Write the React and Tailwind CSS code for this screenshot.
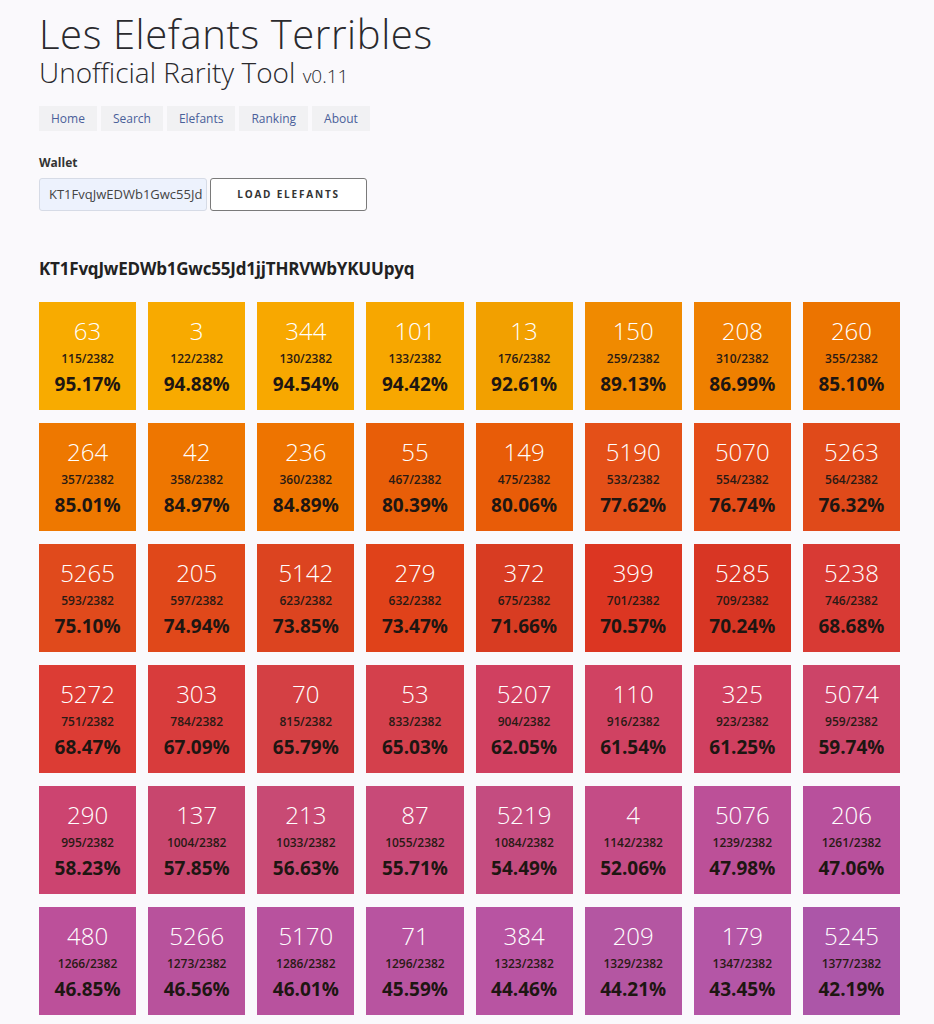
import React from "react";

const tiles = [
  [63, 115, "95.17", "#f8ab00"], [3, 122, "94.88", "#f8aa00"], [344, 130, "94.54", "#f8a800"], [101, 133, "94.42", "#f7a700"],
  [13, 176, "92.61", "#f2a000"], [150, 259, "89.13", "#f08a00"], [208, 310, "86.99", "#ef8000"], [260, 355, "85.10", "#ec7400"],
  [264, 357, "85.01", "#ee7800"], [42, 358, "84.97", "#ee7600"], [236, 360, "84.89", "#ee7400"], [55, 467, "80.39", "#e85e08"],
  [149, 475, "80.06", "#e85c08"], [5190, 533, "77.62", "#e45018"], [5070, 554, "76.74", "#e44c18"], [5263, 564, "76.32", "#e04a1a"],
  [5265, 593, "75.10", "#e04a1c"], [205, 597, "74.94", "#e0481a"], [5142, 623, "73.85", "#dc4420"], [279, 632, "73.47", "#e0421a"],
  [372, 675, "71.66", "#d83c22"], [399, 701, "70.57", "#dc3622"], [5285, 709, "70.24", "#d83624"], [5238, 746, "68.68", "#d83a34"],
  [5272, 751, "68.47", "#dc3c34"], [303, 784, "67.09", "#d83c3c"], [70, 815, "65.79", "#d44044"], [53, 833, "65.03", "#d4404c"],
  [5207, 904, "62.05", "#d04060"], [110, 916, "61.54", "#d04262"], [325, 923, "61.25", "#d04060"], [5074, 959, "59.74", "#cc4468"],
  [290, 995, "58.23", "#cc4470"], [137, 1004, "57.85", "#c8466e"], [213, 1033, "56.63", "#c84a74"], [87, 1055, "55.71", "#c84a78"],
  [5219, 1084, "54.49", "#c44c80"], [4, 1142, "52.06", "#c44c86"], [5076, 1239, "47.98", "#bc5098"], [206, 1261, "47.06", "#b8509c"],
  [480, 1266, "46.85", "#bc509a"], [5266, 1273, "46.56", "#b8529c"], [5170, 1286, "46.01", "#b8529e"], [71, 1296, "45.59", "#b854a0"],
  [384, 1323, "44.46", "#b854a2"], [209, 1329, "44.21", "#b456a2"], [179, 1347, "43.45", "#b456a6"], [5245, 1377, "42.19", "#ac56a8"],
];

const navItems = ["Home", "Search", "Elefants", "Ranking", "About"];

const App = () => {
  return (
    <div
      className="min-h-screen bg-[#faf9fc] text-[#2b2b2b] pl-[39px] pt-[10px] pb-[10px]"
      style={{ fontFamily: '"Open Sans", "DejaVu Sans", sans-serif' }}
    >
      {/* Title */}
      <h1 className="text-[40px] leading-[48px] font-light tracking-[0.6px] text-[#2a2a2e]">
        Les Elefants Terribles
      </h1>
      <h2 className="text-[28px] leading-[28px] font-light text-[#2a2a2e]">
        Unofficial Rarity Tool <span className="text-[19px] leading-[20px]">v0.11</span>
      </h2>

      {/* Nav */}
      <nav className="flex gap-[4px] mt-[20px]">
        {navItems.map((item) => (
          <a
            key={item}
            href="#"
            className="bg-[#f1f1f3] text-[#4a5f9a] text-[12px] h-[25px] leading-[25px] px-[12px]"
          >
            {item}
          </a>
        ))}
      </nav>

      {/* Wallet */}
      <div className="mt-[23px]">
        <label className="block text-[12px] font-bold text-[#333]">Wallet</label>
        <div className="flex gap-[3px] mt-[6px]">
          <div className="w-[168px] h-[33px] bg-[#edf2fd] border border-[#d6dbe6] rounded-[3px] text-[13px] leading-[31px] pl-[9px] text-[#444] overflow-hidden whitespace-nowrap">
            KT1FvqJwEDWb1Gwc55Jd
          </div>
          <button className="w-[157px] h-[33px] bg-white border border-[#7a7a7a] rounded-[3px] text-[10px] font-bold tracking-[1.8px] text-[#333]">
            LOAD ELEFANTS
          </button>
        </div>
      </div>

      {/* Address */}
      <h3 className="mt-[45px] text-[17px] font-bold text-[#222] tracking-[-0.2px]">
        KT1FvqJwEDWb1Gwc55Jd1jjTHRVWbYKUUpyq
      </h3>

      {/* Grid */}
      <div className="grid grid-cols-8 gap-x-[12px] gap-y-[13px] w-[861px] mt-[20px]">
        {tiles.map(([id, rank, pct, color]) => (
          <div
            key={id}
            className="h-[108px] flex flex-col items-center pt-[14px]"
            style={{ backgroundColor: color }}
          >
            <div className="text-white text-[24px] leading-[30px] font-light">{id}</div>
            <div className="text-[#2a1a14] text-[12px] leading-[20px] font-semibold mt-[3px]">
              {rank}/2382
            </div>
            <div className="text-[#1e1612] text-[19px] leading-[26px] font-bold mt-[2px]">
              {pct}%
            </div>
          </div>
        ))}
      </div>
    </div>
  );
};

export default App;
